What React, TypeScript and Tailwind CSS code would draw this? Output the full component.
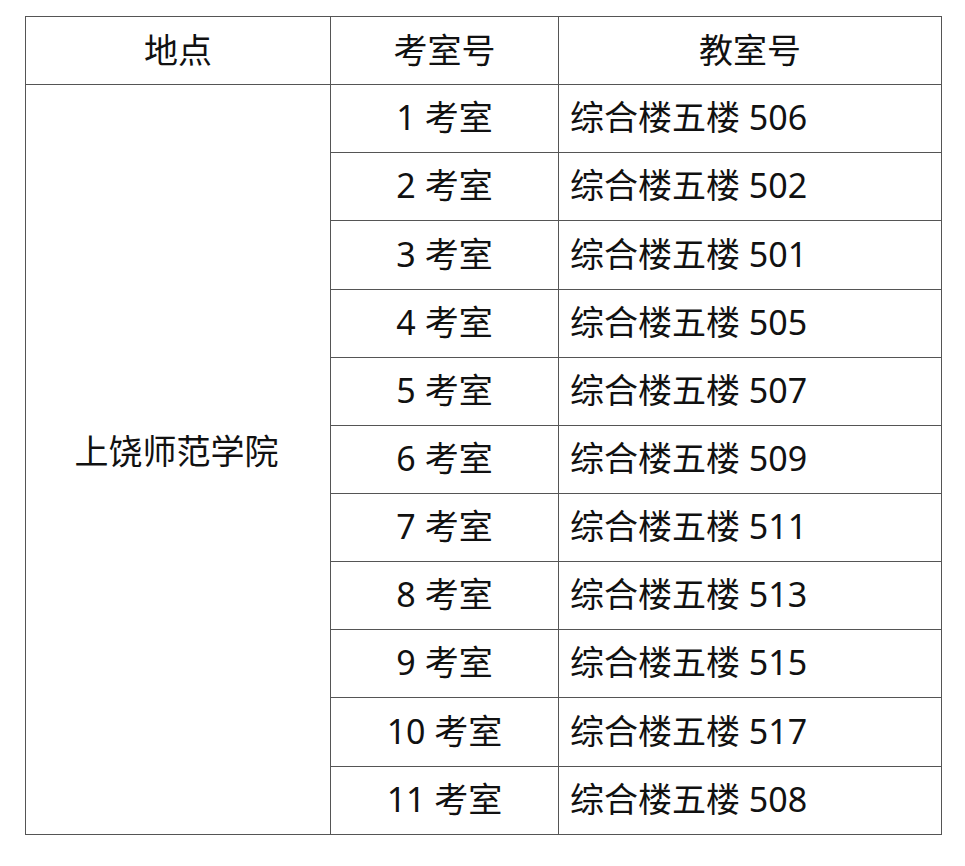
import React from "react";

const rows: { room: string; cls: string; h: string }[] = [
  { room: "1 考室", cls: "综合楼五楼 506", h: "h-[68px]" },
  { room: "2 考室", cls: "综合楼五楼 502", h: "h-[68px]" },
  { room: "3 考室", cls: "综合楼五楼 501", h: "h-[69px]" },
  { room: "4 考室", cls: "综合楼五楼 505", h: "h-[68px]" },
  { room: "5 考室", cls: "综合楼五楼 507", h: "h-[68px]" },
  { room: "6 考室", cls: "综合楼五楼 509", h: "h-[68px]" },
  { room: "7 考室", cls: "综合楼五楼 511", h: "h-[68px]" },
  { room: "8 考室", cls: "综合楼五楼 513", h: "h-[68px]" },
  { room: "9 考室", cls: "综合楼五楼 515", h: "h-[68px]" },
  { room: "10 考室", cls: "综合楼五楼 517", h: "h-[69px]" },
  { room: "11 考室", cls: "综合楼五楼 508", h: "h-[67px]" },
];

export default function App() {
  return (
    <div
      className="w-[965px] h-[866px] bg-white pt-[16px] pl-[25px] text-[34px] text-[#111]"
      style={{ fontFamily: '"Noto Sans", "Noto Sans CJK SC", sans-serif' }}
    >
      <div className="w-[917px] border border-[#555]">
        <div className="flex h-[68px] border-b border-[#555]">
          <div className="w-[305px] border-r border-[#555] flex items-center justify-center leading-none pb-[2px]">地点</div>
          <div className="w-[228px] border-r border-[#555] flex items-center justify-center leading-none pb-[2px]">考室号</div>
          <div className="flex-1 flex items-center justify-center leading-none pb-[2px]">教室号</div>
        </div>
        <div className="flex">
          <div className="w-[305px] border-r border-[#555] flex items-center justify-center leading-none pb-[18px] pr-[3px]">
            上饶师范学院
          </div>
          <div className="flex-1 flex flex-col">
            {rows.map((r, i) => (
              <div
                key={r.room}
                className={`flex ${r.h} ${i < rows.length - 1 ? "border-b border-[#555]" : ""}`}
              >
                <div className="w-[228px] border-r border-[#555] flex items-center justify-center leading-none pb-[3px]">
                  {r.room}
                </div>
                <div className="flex-1 flex items-center pl-[11px] leading-none pb-[3px]">{r.cls}</div>
              </div>
            ))}
          </div>
        </div>
      </div>
    </div>
  );
}
